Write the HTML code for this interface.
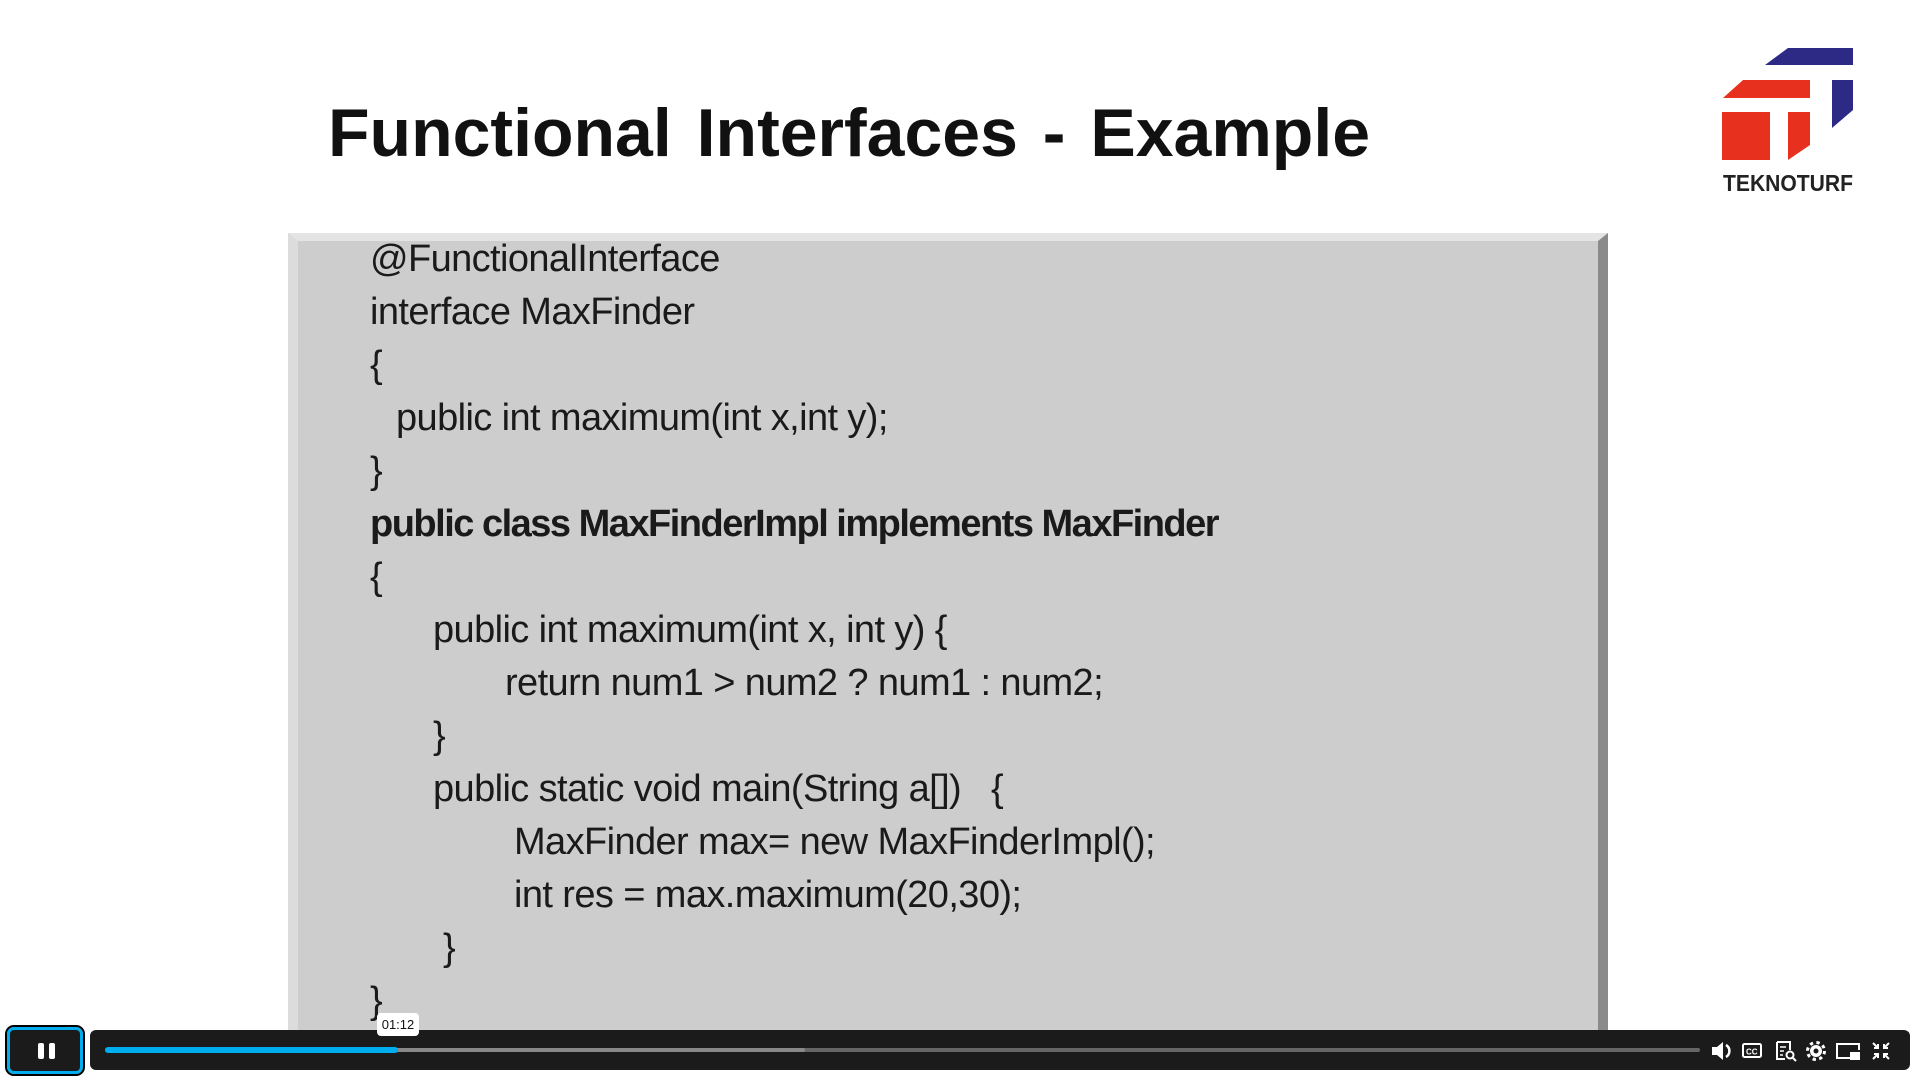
<!DOCTYPE html>
<html><head><meta charset="utf-8"><style>
*{margin:0;padding:0;box-sizing:border-box}
html,body{width:1920px;height:1080px;overflow:hidden}
body{background:#fff;position:relative;font-family:"Liberation Sans",sans-serif}
.title{position:absolute;left:328px;top:94px;font-size:68px;font-weight:bold;color:#111;letter-spacing:0px;word-spacing:6px}
.box{position:absolute;left:288px;top:233px;width:1320px;height:812px;background:#cdcdcd;
border-top:8px solid #e4e4e4;border-left:10px solid #dcdcdc;border-right:10px solid #8a8a8a}
.code{position:absolute;left:0;top:3px;font-size:38px;color:#1a1a1a;letter-spacing:-0.6px}
.code div{position:absolute;white-space:pre}
.bar{position:absolute;left:90px;top:1030px;width:1820px;height:40px;background:#1b1b1b;border-radius:6px}
.pp{position:absolute;left:7px;top:1027px;width:76px;height:47px;background:#1b1b1b;border:3px solid #00adef;outline:2px solid #000;border-radius:7px}
.pp i{position:absolute;top:13px;width:6px;height:16px;background:#fff;border-radius:2px}
</style></head><body>
<div class="title">Functional Interfaces - Example</div>
<svg style="position:absolute;left:0;top:0" width="1920" height="220" viewBox="0 0 1920 220">
<polygon points="1765,65 1788,48 1853,48 1853,65" fill="#2d2a86"/>
<polygon points="1832,80 1853,80 1853,110 1832,128" fill="#2d2a86"/>
<polygon points="1723,98 1743,80 1810,80 1810,98" fill="#e8301f"/>
<polygon points="1722,112 1770,112 1770,160 1722,160" fill="#e8301f"/>
<polygon points="1788,112 1810,112 1810,145 1788,160" fill="#e8301f"/>
<text x="1723" y="191" font-family="Liberation Sans" font-weight="bold" font-size="23" fill="#222" textLength="130" lengthAdjust="spacingAndGlyphs">TEKNOTURF</text>
</svg>
<div class="box"><div class="code">
<div style="left:72px;top:-6px">@FunctionalInterface</div>
<div style="left:72px;top:47px">interface MaxFinder</div>
<div style="left:72px;top:100px">{</div>
<div style="left:98px;top:153px">public int maximum(int x,int y);</div>
<div style="left:72px;top:206px">}</div>
<div style="left:72px;top:259px;font-weight:bold;letter-spacing:-1.5px">public class MaxFinderImpl implements MaxFinder</div>
<div style="left:72px;top:312px">{</div>
<div style="left:135px;top:365px">public int maximum(int x, int y) {</div>
<div style="left:207px;top:418px">return num1 &gt; num2 ? num1 : num2;</div>
<div style="left:135px;top:471px">}</div>
<div style="left:135px;top:524px">public static void main(String a[])   {</div>
<div style="left:216px;top:577px">MaxFinder max= new MaxFinderImpl();</div>
<div style="left:216px;top:630px">int res = max.maximum(20,30);</div>
<div style="left:145px;top:683px">}</div>
<div style="left:72px;top:736px">}</div>
</div></div>
<div class="bar">
<div style="position:absolute;left:15px;top:18px;width:1595px;height:4px;background:#666;border-radius:2px"></div>
<div style="position:absolute;left:15px;top:18px;width:700px;height:4px;background:#888;border-radius:2px"></div>
<div style="position:absolute;left:15px;top:17px;width:293px;height:6px;background:#00adef;border-radius:3px"></div>
<svg style="position:absolute;left:1620px;top:7px" width="200" height="28" viewBox="0 0 200 26" fill="#fff" stroke="#fff">
<path d="M2 9h5l6-5v18l-6-5H2z" stroke="none"/><path d="M16 7a7 7 0 0 1 0 12" fill="none" stroke-width="2.5"/>
<rect x="33" y="6" width="18" height="13" rx="1.5" fill="none" stroke-width="2"/><text x="36" y="16.5" font-size="8" font-weight="bold" stroke="none" font-family="Liberation Sans">CC</text>
<path d="M67 4h13v8M67 4v17h8" fill="none" stroke-width="2"/><path d="M70 9h6M70 13h4M70 17h3" stroke-width="1.5"/><circle cx="80" cy="17" r="3.5" fill="none" stroke-width="2"/><path d="M83 20l3 3" stroke-width="2"/>
<circle cx="106" cy="13" r="6" stroke="none"/><circle cx="106" cy="13" r="8.5" fill="none" stroke-width="3" stroke-dasharray="3.3 3.4"/><circle cx="106" cy="13" r="2.5" fill="#1b1b1b" stroke="none"/>
<path d="M142 20h-15V6h22v6" fill="none" stroke-width="2"/><rect x="140" y="14" width="10" height="8" stroke="none"/>
<path d="M163 5l5 5M168 6v4h-4M179 5l-5 5M174 6v4h4M163 21l5-5M164 16h4v4M179 21l-5-5M178 16h-4v4" fill="none" stroke-width="2"/>
</svg>
</div>
<div style="position:absolute;left:377px;top:1013px;width:42px;height:23px;background:#fff;border-radius:4px;font-size:13px;text-align:center;line-height:23px;color:#111">01:12</div>
<div class="pp"><i style="left:28px"></i><i style="left:39px"></i></div>
</body></html>
